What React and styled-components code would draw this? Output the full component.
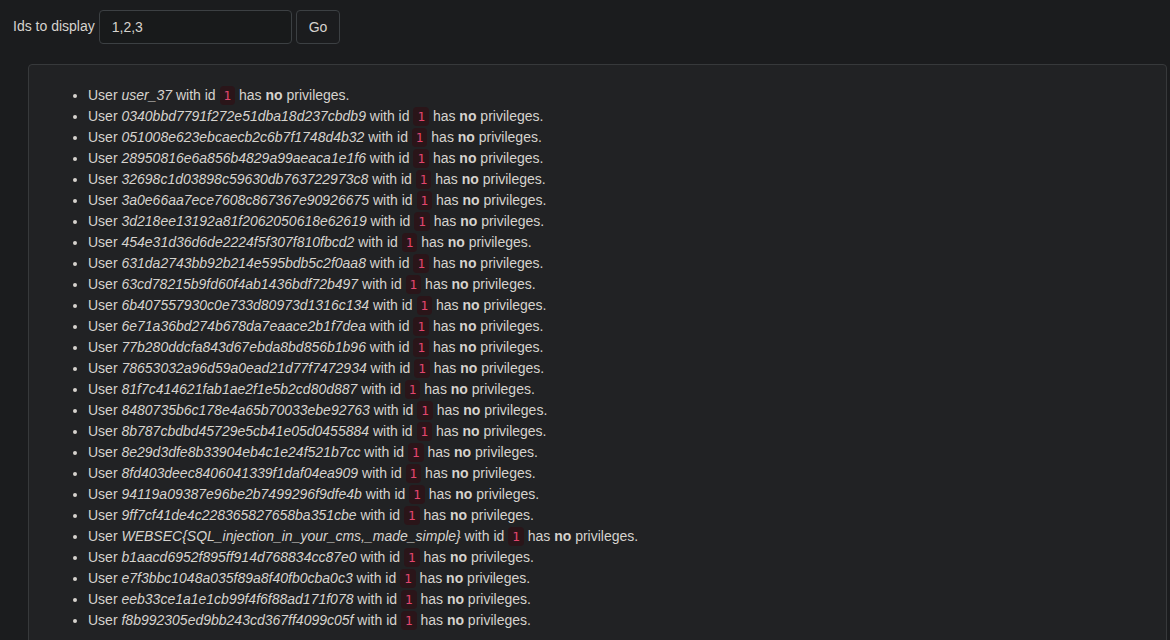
import * as React from 'react'
import styled, { createGlobalStyle } from 'styled-components'

const GlobalStyle = createGlobalStyle`
  html, body {
    margin: 0;
    padding: 0;
    background: #1b1c1e;
    color: #d6d3ce;
    font-family: "Liberation Sans", Arial, sans-serif;
    font-size: 14px;
  }
`

const Page = styled.div`
  padding: 10px 3px 0 13px;
`

const Form = styled.form`
  display: flex;
  align-items: center;
  gap: 4px;
  height: 34px;
`

const Label = styled.label`
  font-size: 14px;
  color: #d6d3ce;
  line-height: 20px;
  margin-top: -3px;
`

const Input = styled.input`
  box-sizing: border-box;
  width: 193px;
  height: 34px;
  padding: 0 12px;
  background: #181a1b;
  border: 1px solid #3c4043;
  border-radius: 4px;
  color: #d6d3ce;
  font-family: "Liberation Sans", Arial, sans-serif;
  font-size: 14px;
  outline: none;
`

const Button = styled.button`
  box-sizing: border-box;
  height: 34px;
  padding: 0 12px;
  background: #1b1c1e;
  border: 1px solid #3c4043;
  border-radius: 4px;
  color: #d6d3ce;
  font-family: "Liberation Sans", Arial, sans-serif;
  font-size: 14px;
`

const Well = styled.div`
  margin: 20px 0 0 15px;
  padding: 20px 19px 19px;
  min-height: 600px;
  background: #212224;
  border: 1px solid #37393b;
  border-radius: 4px;
`

const List = styled.ul`
  margin: 0;
  padding-left: 40px;
  line-height: 21px;
`

const Item = styled.li`
  color: #d6d3ce;
`

const Code = styled.code`
  font-family: "DejaVu Sans Mono", "Liberation Mono", monospace;
  font-size: 12.6px;
  line-height: 12px;
  padding: 2px 4px;
  background: #2a1519;
  color: #e2466f;
  border-radius: 4px;
`

const users = [
  'user_37',
  '0340bbd7791f272e51dba18d237cbdb9',
  '051008e623ebcaecb2c6b7f1748d4b32',
  '28950816e6a856b4829a99aeaca1e1f6',
  '32698c1d03898c59630db763722973c8',
  '3a0e66aa7ece7608c867367e90926675',
  '3d218ee13192a81f2062050618e62619',
  '454e31d36d6de2224f5f307f810fbcd2',
  '631da2743bb92b214e595bdb5c2f0aa8',
  '63cd78215b9fd60f4ab1436bdf72b497',
  '6b407557930c0e733d80973d1316c134',
  '6e71a36bd274b678da7eaace2b1f7dea',
  '77b280ddcfa843d67ebda8bd856b1b96',
  '78653032a96d59a0ead21d77f7472934',
  '81f7c414621fab1ae2f1e5b2cd80d887',
  '8480735b6c178e4a65b70033ebe92763',
  '8b787cbdbd45729e5cb41e05d0455884',
  '8e29d3dfe8b33904eb4c1e24f521b7cc',
  '8fd403deec8406041339f1daf04ea909',
  '94119a09387e96be2b7499296f9dfe4b',
  '9ff7cf41de4c228365827658ba351cbe',
  'WEBSEC{SQL_injection_in_your_cms,_made_simple}',
  'b1aacd6952f895ff914d768834cc87e0',
  'e7f3bbc1048a035f89a8f40fb0cba0c3',
  'eeb33ce1a1e1cb99f4f6f88ad171f078',
  'f8b992305ed9bb243cd367ff4099c05f'
]

export default function App() {
  return (
    <Page>
      <GlobalStyle />
      <Form onSubmit={e => e.preventDefault()}>
        <Label>Ids to display</Label>
        <Input defaultValue="1,2,3" />
        <Button type="submit">Go</Button>
      </Form>
      <Well>
        <List>
          {users.map(u => (
            <Item key={u}>
              User <i>{u}</i> with id <Code>1</Code> has <b>no</b> privileges.
            </Item>
          ))}
        </List>
      </Well>
    </Page>
  )
}
